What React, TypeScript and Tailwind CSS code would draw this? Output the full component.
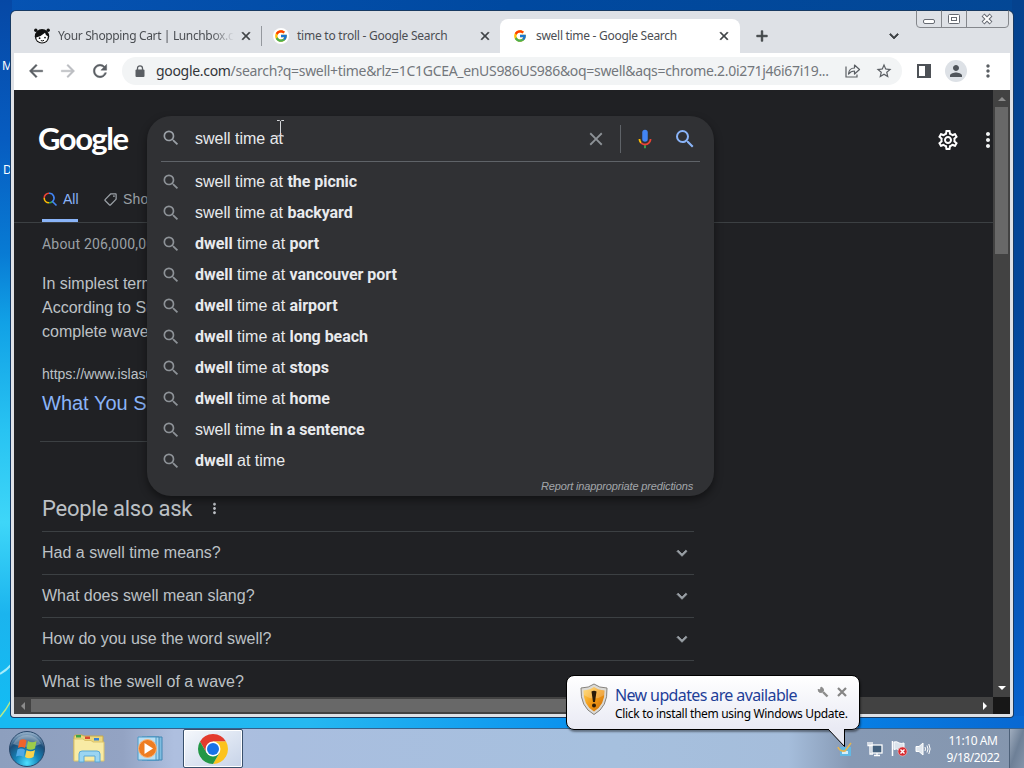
import { FcGoogle } from "react-icons/fc";
import {
  MdAdd,
  MdArrowBack,
  MdArrowForward,
  MdClose,
  MdKeyboardArrowDown,
  MdMoreVert,
  MdOutlineSell,
  MdOutlineSettings,
  MdPerson,
  MdRefresh,
  MdSearch,
  MdStarBorder,
} from "react-icons/md";

type Part = { text: string; bold?: boolean };

const suggestions: Part[][] = [
  [{ text: "swell time at " }, { text: "the picnic", bold: true }],
  [{ text: "swell time at " }, { text: "backyard", bold: true }],
  [{ text: "dwell", bold: true }, { text: " time at " }, { text: "port", bold: true }],
  [{ text: "dwell", bold: true }, { text: " time at " }, { text: "vancouver port", bold: true }],
  [{ text: "dwell", bold: true }, { text: " time at " }, { text: "airport", bold: true }],
  [{ text: "dwell", bold: true }, { text: " time at " }, { text: "long beach", bold: true }],
  [{ text: "dwell", bold: true }, { text: " time at " }, { text: "stops", bold: true }],
  [{ text: "dwell", bold: true }, { text: " time at " }, { text: "home", bold: true }],
  [{ text: "swell time " }, { text: "in a sentence", bold: true }],
  [{ text: "dwell", bold: true }, { text: " at time" }],
];

const questions = [
  "Had a swell time means?",
  "What does swell mean slang?",
  "How do you use the word swell?",
  "What is the swell of a wave?",
];

function LunchboxIcon() {
  return (
    <svg width="16" height="16" viewBox="0 0 16 16" className="shrink-0">
      <circle cx="1.800" cy="2.200" r="1.700" fill="#111" />
      <circle cx="14.200" cy="2.200" r="1.700" fill="#111" />
      <circle cx="8" cy="8.300" r="7.200" fill="#111" />
      <path d="M2.200 9.500Q7 8.600 11 4.800Q11.500 7.800 13.900 8.200Q13.600 14.400 8 14.400Q2.800 14.200 2.200 9.500Z" fill="#fff" />
      <circle cx="5.600" cy="10.200" r="0.900" fill="#111" />
      <circle cx="11" cy="9.600" r="0.900" fill="#111" />
      <path d="M6.800 12.500Q8.500 13.400 10 12.300" stroke="#111" fill="none" />
    </svg>
  );
}

function WindowButtons() {
  return (
    <svg width="93" height="18" viewBox="0 0 93 18" className="absolute right-[4px] top-[-1px]" fill="none">
      <path d="M.5 .5V14Q.5 17.500 4 17.500H89Q92.500 17.500 92.500 14V.5M25.500 .5V17.500M50.500 .5V17.500" stroke="#84878c" />
      <rect x="7.500" y="9.500" width="11" height="4" rx="1.500" fill="#fff" stroke="#666a72" />
      <rect x="32.500" y="4.500" width="11" height="9" rx="1" fill="#fff" stroke="#666a72" />
      <rect x="35.500" y="7.500" width="5" height="3" stroke="#666a72" />
      <path d="M67 5l8 8M75 5l-8 8" stroke="#666a72" strokeWidth="4" />
      <path d="M67.500 5.500l7 7M74.500 5.500l-7 7" stroke="#fff" strokeWidth="2" />
    </svg>
  );
}

function TabStrip() {
  return (
    <div className="relative flex h-[42px] shrink-0 pt-2 pl-[23px] text-[12px] text-[#4b4e53]">
      <div className="flex h-[34px] w-[227px] items-center">
        <LunchboxIcon />
        <div className="ml-2 w-[178px] overflow-hidden whitespace-nowrap tracking-[-0.36px] [mask-image:linear-gradient(to_right,black_86%,transparent_99%)]">
          Your Shopping Cart | Lunchbox.com
        </div>
        <MdClose className="ml-[3px] size-[14px] shrink-0 text-[#3c4043] [&>path:last-child]:stroke-1" />
      </div>
      <div className="mt-[7px] h-[20px] w-px bg-[#94989e]" />
      <div className="flex h-[34px] w-[238px] items-center pl-[11px]">
        <div className="flex size-4 shrink-0 items-center justify-center rounded-full bg-white">
          <FcGoogle className="size-[14px]" />
        </div>
        <div className="ml-[8px] w-[180px] whitespace-nowrap tracking-[-0.24px]">time to troll - Google Search</div>
        <MdClose className="ml-px size-[14px] shrink-0 text-[#3c4043] [&>path:last-child]:stroke-1" />
      </div>
      <div className="flex h-[34px] w-[240px] items-center rounded-t-lg bg-white pl-[13px]">
        <FcGoogle className="size-[14px]" />
        <div className="ml-[9px] w-[181px] whitespace-nowrap tracking-[-0.29px]">swell time - Google Search</div>
        <MdClose className="size-[14px] shrink-0 text-[#3c4043] [&>path:last-child]:stroke-1" />
      </div>
      <MdAdd className="mt-[8px] ml-[13px] size-[18px] text-[#3c4043] [&>path:last-child]:stroke-1" />
      <MdKeyboardArrowDown className="mt-[8px] ml-[114px] size-[18px] text-[#3c4043] [&>path:last-child]:stroke-1" />
      <WindowButtons />
    </div>
  );
}

function Toolbar() {
  return (
    <div className="flex h-[37px] shrink-0 items-center bg-white pb-px pl-[12px] text-[#5a5e63]">
      <MdArrowBack className="size-5 [&>path:last-child]:stroke-[0.5px]" />
      <MdArrowForward className="ml-3 size-5 text-[#bcbec2] [&>path:last-child]:stroke-[0.5px]" />
      <MdRefresh className="ml-[12px] size-5 [&>path:last-child]:stroke-[0.5px]" />
      <div className="ml-[12px] flex h-7 w-[780px] items-center rounded-full bg-[#f2f4f5]">
        <svg width="10" height="13" viewBox="0 0 10 13" className="ml-[13px] shrink-0">
          <rect x="0.500" y="4.500" width="9" height="7.500" rx="1" fill="currentColor" />
          <path d="M2.500 5V3.300A2.500 2.500 0 0 1 7.500 3.300V5" fill="none" stroke="currentColor" strokeWidth="1.300" />
        </svg>
        <div className="ml-[11px] w-[684px] whitespace-nowrap text-[14px] leading-[20px] tracking-[-0.31px] text-[#73777c]">
          <span className="text-[#33363a]">google.com</span>
          /search?q=swell+time&amp;rlz=1C1GCEA_enUS986US986&amp;oq=swell&amp;aqs=chrome.2.0i271j46i67i19...
        </div>
        <svg width="17" height="16" viewBox="0 0 17 16" fill="none" stroke="currentColor" strokeWidth="1.200" className="ml-[4px]">
          <path d="M2 3.500V14H13V11.500" />
          <path d="M4.500 11Q5 5 10.500 5V2L15.500 6.500L10.500 11V8Q7 8 4.500 11Z" strokeLinejoin="round" />
        </svg>
        <MdStarBorder className="ml-[14px] size-[18px]" />
      </div>
      <svg width="14" height="14" viewBox="0 0 14 14" className="ml-[15px]">
        <path d="M0 0H14V14H0ZM2 2V12H8V2Z" fill="#4d5156" fillRule="evenodd" />
      </svg>
      <div className="ml-[14px] flex size-[22px] items-center justify-center rounded-full bg-[#dde1e6]">
        <MdPerson className="size-[18px] text-[#50555b]" />
      </div>
      <MdMoreVert className="ml-[11px] size-[20px]" />
    </div>
  );
}

function MicIcon() {
  return (
    <svg width="22" height="22" viewBox="0 0 24 24">
      <path d="M12 15a3 3 0 0 0 3-3V5a3 3 0 0 0-6 0v7a3 3 0 0 0 3 3z" fill="#4285f4" />
      <path d="M11 18.900h2V22h-2z" fill="#34a853" />
      <path d="M7 12H5c0 1.900.8 3.700 2.050 4.950l1.400-1.400C7.560 14.640 7 13.400 7 12z" fill="#fbbc04" />
      <path d="M12 17c-1.400 0-2.640-.56-3.550-1.450l-1.400 1.400C8.300 18.200 10.100 19 12 19c3.870 0 7-3.130 7-7h-2c0 2.760-2.240 5-5 5z" fill="#ea4335" />
    </svg>
  );
}

function SearchDropdown() {
  return (
    <div className="absolute top-[26px] left-[133px] flex h-[380px] w-[567px] flex-col rounded-[24px] bg-[#303134] text-[16px] text-[#e8eaed] shadow-[0_4px_8px_rgba(0,0,0,0.45)]">
      <div className="mx-[14px] flex h-[46px] items-center border-b border-[#5f6368]">
        <MdSearch className="size-5 -translate-y-px text-[#9aa0a6]" />
        <div className="ml-[14px] w-[388px] whitespace-pre">swell time at</div>
        <MdClose className="ml-[2px] size-[22px] text-[#8d9297]" />
        <div className="ml-[13px] h-[28px] w-px bg-[#5f6368]" />
        <div className="ml-[13px]">
          <MicIcon />
        </div>
        <MdSearch className="ml-[17px] size-[24px] shrink-0 text-[#8ab4f8]" />
      </div>
      <div className="pt-[4px]">
        {suggestions.map((parts, i) => (
          <div key={i} className="flex h-[31px] items-center pl-[14px]">
            <MdSearch className="size-5 text-[#8d9297]" />
            <div className="ml-[14px] whitespace-pre">
              {parts.map((p, j) => (
                <span key={j} className={p.bold ? "font-['Roboto'] font-bold tracking-[-0.05px]" : ""}>
                  {p.text}
                </span>
              ))}
            </div>
          </div>
        ))}
      </div>
      <div className="mt-[4px] mr-[21px] text-right text-[11px] leading-[13px] tracking-[-0.14px] text-[#a3a7ab] italic">
        Report inappropriate predictions
      </div>
      {/* mouse text cursor */}
      <svg width="9" height="17" viewBox="0 0 9 17" className="absolute top-[4px] left-[129px]" fill="none" stroke="#d5d7da">
        <path d="M1 .5H3.500L4.500 1.500L5.500 .5H8M4.500 1.500V15M1 16H3.500L4.500 15L5.500 16H8" />
      </svg>
    </div>
  );
}

function ResultsPage() {
  return (
    <div className="relative h-[607px] w-[979px] overflow-hidden bg-[#202124] font-['Liberation_Sans',sans-serif] text-[#bdc1c6]">
      <div className="flex h-[98px] items-center pt-px pl-[24px]">
        <div className="w-[92px] pb-[3px] font-['Lato',sans-serif] text-[31px] leading-[36px] font-bold tracking-[-1.5px] text-white">
          Google
        </div>
        <MdOutlineSettings className="ml-[809px] size-6 shrink-0 text-white" />
        <MdMoreVert className="ml-[16px] size-6 shrink-0 text-[#f1f3f4]" />
      </div>
      <div className="flex h-[35px] border-b border-[#3c4043] pl-[28px] text-[14px]">
        <div className="flex h-[34px] w-[36px] items-center border-b-[3px] border-[#8ab4f8] pb-[9px] text-[#8ab4f8]">
          <svg width="15" height="15" viewBox="0 0 15 15" fill="none" strokeWidth="1.600" className="mt-px ml-px shrink-0">
            <path d="M6 1.200A4.800 4.800 0 0 0 1.200 6" stroke="#ea4335" />
            <path d="M1.200 6A4.800 4.800 0 0 0 6 10.800" stroke="#fbbc04" />
            <path d="M6 10.800A4.800 4.800 0 0 0 9.500 9.500" stroke="#34a853" />
            <path d="M6 1.200A4.800 4.800 0 0 1 9.500 9.500L13.500 13.500" stroke="#4285f4" />
          </svg>
          <span className="ml-[5px]">All</span>
        </div>
        <div className="flex h-[23px] items-center pl-[25px] text-[#9aa0a6]">
          <MdOutlineSell className="size-[15px] -scale-x-100" />
          <span className="ml-[5px] tracking-[0.2px]">Shopping</span>
        </div>
      </div>
      <div className="w-[680px] pl-[28px]">
        <div className="mt-[12px] font-['Roboto'] text-[14px] leading-[18px] tracking-[0.2px] text-[#9aa0a6]">
          About 206,000,000 results
        </div>
        <div className="mt-[19px] text-[16px] leading-[24px]">
          In simplest terms
          <br />
          According to Surf
          <br />
          complete wave
        </div>
        <div className="mt-[21px] text-[14px] leading-[18px]">https://www.islasurf</div>
        <div className="mt-[7px] text-[20px] leading-[26px] text-[#8ab4f8]">What You Should</div>
        <div className="mt-[25px] -ml-[2px] h-px w-[654px] bg-[#3c4043]" />
        <div className="mt-[50px] flex h-[32px] items-center font-['Roboto'] text-[22px] tracking-[-0.25px]">
          People also ask
          <MdMoreVert className="ml-[14px] size-[17px]" />
        </div>
        <div className="mt-[7px]">
          {questions.map((q) => (
            <div key={q} className="flex h-[43px] items-center justify-between border-t border-[#3c4043] text-[16px]">
              {q}
              <MdKeyboardArrowDown className="mr-[2px] size-5 text-[#9aa0a6] [&>path:last-child]:stroke-1" />
            </div>
          ))}
        </div>
      </div>
      <SearchDropdown />
    </div>
  );
}

function BrowserWindow() {
  return (
    <div className="absolute top-[11px] left-[11px] flex h-[706px] w-[1002px] flex-col rounded-t-[5px] rounded-b-[3px] bg-[#dee1e6] shadow-[0_0_0_1px_#173a63]">
      <TabStrip />
      <div className="mr-[3px] mb-[3px] ml-[3px] flex grow flex-col overflow-hidden">
        <Toolbar />
        <div className="flex">
          <ResultsPage />
          <div className="flex w-[17px] flex-col items-center bg-[#424242]">
            <div className="flex h-[17px] items-center">
              <div className="border-x-4 border-b-4 border-x-transparent border-b-[#8b8b8b]" />
            </div>
            <div className="h-[147px] w-[13px] bg-[#686868]" />
            <div className="mt-auto mb-[7px] border-x-4 border-t-4 border-x-transparent border-t-white" />
          </div>
        </div>
        <div className="flex h-[17px]">
          <div className="flex w-[979px] items-center bg-[#424242]">
            <div className="flex w-[17px] justify-center">
              <div className="border-y-4 border-r-4 border-y-transparent border-r-[#8b8b8b]" />
            </div>
            <div className="h-[13px] w-[760px] bg-[#686868]" />
            <div className="mr-[6px] ml-auto border-y-4 border-l-4 border-y-transparent border-l-white" />
          </div>
          <div className="grow bg-[#171717]" />
        </div>
      </div>
    </div>
  );
}

function StartOrb() {
  return (
    <svg width="38" height="38" viewBox="0 0 38 38">
      <defs>
        <radialGradient id="orb" cx="50%" cy="90%" r="85%">
          <stop offset="0" stopColor="#4fe0ff" />
          <stop offset="0.400" stopColor="#1583b8" />
          <stop offset="0.750" stopColor="#1c4d78" />
          <stop offset="1" stopColor="#8ba9c4" />
        </radialGradient>
      </defs>
      <circle cx="19" cy="19" r="17.500" fill="url(#orb)" stroke="#29486b" />
      <path d="M5 14A15 14 0 0 1 33 14Q20 20 5 14Z" fill="#fff" opacity=".28" />
      <path d="M11.500 10.500Q15 8 18.500 10.500L17 18Q13.500 16 10 18Z" fill="#f0642c" />
      <path d="M20 11Q24 13.500 28.500 11L27 18.500Q22.500 21 18.500 18.500Z" fill="#9ccc4a" />
      <path d="M9.500 19.500Q13.500 17.500 17 20L15.500 27Q12 25 8 26.500Z" fill="#4fa8e6" />
      <path d="M18.500 20.200Q23 22.500 27 20L25.500 27Q21 29.500 17 27Z" fill="#fbd34c" />
    </svg>
  );
}

function ExplorerIcon() {
  return (
    <svg width="34" height="30" viewBox="0 0 34 30">
      <path d="M2 3Q2 1 4 1H10L12 2H31V26H2Z" fill="#ecd77c" stroke="#c6a94d" />
      <path d="M4 1H9V3.500H4Z" fill="#3fa648" />
      <path d="M13 2.500H18V5H13Z" fill="#d8492f" />
      <path d="M22 4H27V6.500H22Z" fill="#3a82cf" />
      <path d="M2 5H11L13 6.500H19L21 8H32V27H2Z" fill="#f8eba5" stroke="#dcc36a" />
      <path d="M7 28V20Q7 17 10 17H25Q28 17 28 20V28H23V22H12V28Z" fill="#9bd5f2" stroke="#5aa8d6" />
    </svg>
  );
}

function MediaPlayerIcon() {
  return (
    <svg width="28" height="26" viewBox="0 0 28 26">
      <path d="M10 1H25V24H10Z" fill="#7fbce0" stroke="#4288b5" />
      <path d="M5 1H22V24H5Z" fill="#a6d6ef" stroke="#4288b5" />
      <path d="M1 1H19V24H1Z" fill="#b9dff3" stroke="#4b9ac8" />
      <circle cx="10.500" cy="12.500" r="9" fill="#ee7d22" stroke="#f7b27a" />
      <path d="M7.500 7V18L16 12.500Z" fill="#fff" />
    </svg>
  );
}

function ChromeIcon() {
  return (
    <svg width="32" height="32" viewBox="0 0 48 48">
      <path d="M24 24L4.500 12.800A22.500 22.500 0 0 1 43.500 12.800H24Z" fill="#e33b2e" />
      <path d="M24 24L43.500 12.800A22.500 22.500 0 0 1 24 46.500L33.700 29.600Z" fill="#fcc31e" />
      <path d="M24 12.800H43.500L34 30Z" fill="#fcc31e" />
      <path d="M24 12.800L14.300 29.600L4.500 12.800Z" fill="#e33b2e" />
      <path d="M4.500 12.800L14.300 29.600L24 35L33.700 29.600L24 46.500A22.500 22.500 0 0 1 4.500 12.800Z" fill="#239746" />
      <circle cx="24" cy="24" r="11.200" fill="#fff" />
      <circle cx="24" cy="24" r="9" fill="#1a73e8" />
    </svg>
  );
}

function UpdateIcon() {
  return (
    <svg width="16" height="16" viewBox="0 0 16 16">
      <path d="M3 6H14V15H3Z" fill="#62b9e4" />
      <path d="M5 10H11V13H5Z" fill="#d6eef8" />
      <path d="M1 6A6 5 0 0 0 8 10L14 2" fill="none" stroke="#e4b552" strokeWidth="1.600" />
    </svg>
  );
}

function NetworkIcon() {
  return (
    <svg width="16" height="16" viewBox="0 0 16 16" fill="none">
      <rect x="5" y="4" width="10" height="8" fill="#44617e" stroke="#fff" strokeWidth="1.300" />
      <path d="M7 14.500H13M10 12V14.500M1 1V4.500H5V1M3 1V4M3 4.500V13H6" stroke="#fff" strokeWidth="1.300" />
    </svg>
  );
}

function FlagIcon() {
  return (
    <svg width="17" height="17" viewBox="0 0 17 17">
      <path d="M1.500 1V16" stroke="#fff" strokeWidth="1.500" />
      <path d="M3 2Q6 1 8 3Q10 4 13 3V10Q10 11 8 10Q6 8 3 9.500Z" fill="#dbe3ec" stroke="#fff" />
      <circle cx="11.500" cy="11.500" r="4.500" fill="#d82a30" stroke="#f3c2c3" strokeWidth=".6" />
      <path d="M9.500 9.500L13.500 13.500M13.500 9.500L9.500 13.500" stroke="#fff" strokeWidth="1.400" />
    </svg>
  );
}

function SpeakerIcon() {
  return (
    <svg width="16" height="16" viewBox="0 0 16 16" fill="none" stroke="#fff">
      <path d="M1 5.500H4L8 2V14L4 10.500H1Z" fill="#dfe6ee" />
      <path d="M10 6Q11 8 10 10M12 4.500Q14 8 12 11.500M13.800 3Q16.500 8 13.800 13" />
    </svg>
  );
}

function Taskbar() {
  return (
    <div className="absolute inset-x-0 bottom-0 flex h-[40px] items-center border-t border-[#35618d] bg-[linear-gradient(to_right,#8d9fbe_0%,#93a3c3_12%,#aebfdf_17%,#a9bedf_28%,#a6c0de_60%,#a5bddb_77%,#8699b4_83%,#8596ae_100%)]">
      <div className="ml-[8px]">
        <StartOrb />
      </div>
      <div className="ml-[26px]">
        <ExplorerIcon />
      </div>
      <div className="ml-[31px]">
        <MediaPlayerIcon />
      </div>
      <div className="ml-[18px] flex h-[39px] w-[60px] items-center justify-center rounded-[2px] border border-[#39506c] bg-linear-to-br from-[#f5f8fc] to-[#c7d3e8] shadow-[inset_0_0_0_1px_#fff]">
        <ChromeIcon />
      </div>
      <div className="ml-auto flex items-center">
        <UpdateIcon />
        <div className="ml-[14px]">
          <NetworkIcon />
        </div>
        <div className="ml-[8px]">
          <FlagIcon />
        </div>
        <div className="ml-[7px]">
          <SpeakerIcon />
        </div>
        <div className="ml-[10px] w-[64px] text-center text-[12px] leading-[17px] tracking-[-0.44px] whitespace-nowrap text-white">
          11:10 AM
          <br />
          9/18/2022
        </div>
        <div className="ml-[4px] h-[39px] w-[15px] border-l border-[#4d6078] bg-linear-to-br from-[#a0adbe] via-[#6e8097] to-[#8494aa]" />
      </div>
    </div>
  );
}

function UpdateBalloon() {
  return (
    <div className="absolute top-[675px] left-[566px] flex h-[55px] w-[294px] rounded-[8px] border border-black bg-linear-to-b from-white to-[#e9eaf4] shadow-[1px_2px_2px_rgba(0,0,0,0.4)]">
      <svg width="28" height="33" viewBox="0 0 28 33" className="mt-[7px] ml-[13px] shrink-0">
        <defs>
          <linearGradient id="shield" x1="0" y1="0" x2="1" y2="1">
            <stop offset="0" stopColor="#ffd65a" />
            <stop offset="0.500" stopColor="#f39a16" />
            <stop offset="1" stopColor="#c86b09" />
          </linearGradient>
        </defs>
        <path d="M14 1Q19 5 27 5Q28 24 14 31.500Q0 24 1 5Q9 5 14 1Z" fill="#dcdad5" stroke="#85827d" />
        <path d="M14 4Q18 7 24.500 7.500Q25 22 14 28.500Q3 22 3.500 7.500Q10 7 14 4Z" fill="url(#shield)" />
        <path d="M14 4Q18 7 24.500 7.500L24.300 12Q14 19 3.700 12L3.500 7.500Q10 7 14 4Z" fill="#fff" opacity=".22" />
        <path d="M11.500 8.500Q14 7 16.500 8.500L15 19H13Z" fill="#2a1a08" />
        <circle cx="14" cy="22.500" r="2" fill="#2a1a08" />
      </svg>
      <div className="ml-[7px] whitespace-nowrap">
        <div className="mt-[9px] text-[16px] leading-[20px] tracking-[-0.62px] text-[#1f3f98]">New updates are available</div>
        <div className="text-[12px] leading-[17px] tracking-[-0.32px] text-black">Click to install them using Windows Update.</div>
      </div>
      <div className="absolute top-[10px] right-[12px] flex gap-[8px]">
        <svg width="12" height="12" viewBox="0 0 12 12" fill="none" stroke="#8c8c8c">
          <path d="M6 6L10.500 10.500" strokeWidth="2.400" />
          <path d="M1 3.500L3.500 4L4 1Q7 2 6.500 5Q5 7.500 2 6Z" fill="#8c8c8c" />
        </svg>
        <svg width="10" height="12" viewBox="0 0 10 12" fill="none" stroke="#858585" strokeWidth="2.200">
          <path d="M1 2L9 10M9 2L1 10" />
        </svg>
      </div>
      <svg width="20" height="20" viewBox="0 0 20 20" className="absolute top-[52px] left-[260px]">
        <path d="M0 0H17.500V18.500L1 1Z" fill="#e9eaf4" />
        <path d="M1 1L17.500 18.500V1" stroke="#000" fill="none" />
      </svg>
    </div>
  );
}

function App() {
  return (
    <div className="relative h-[768px] w-[1024px] overflow-hidden bg-[linear-gradient(to_right,#0653b3,#0049a0_50%,#034795)] font-['Noto_Sans',sans-serif]">
      {/* wallpaper */}
      <div className="absolute inset-y-0 left-0 w-[12px] bg-[linear-gradient(to_bottom,#0648a5_0%,#075cc0_18%,#087bd4_33%,#11a1e6_42%,#28c3f2_56%,#3ed6f8_68%,#1bb4ee_80%,#12bdf4_95%)]" />
      <div className="absolute inset-y-0 right-0 w-[12px] bg-[linear-gradient(to_bottom,#04428e,#04479a_40%,#0759bd_80%,#0868d6)]" />
      <div className="absolute inset-x-0 top-[716px] h-[14px] bg-[linear-gradient(to_right,#17b9f1,#25b8f1_30%,#0c93ee_55%,#0784e8_80%,#0868d2)]" />
      <svg width="12" height="90" viewBox="0 0 12 90" className="absolute top-[650px] left-0" fill="none">
        <path d="M0 24Q7 20 12 14" stroke="#a5ecfa" strokeWidth="2" />
        <path d="M0 67Q6 60 12 49" stroke="#b7e98a" strokeWidth="1.500" />
      </svg>
      <div className="absolute top-[58px] left-[2px] text-[12px] leading-[16px] text-white">M</div>
      <div className="absolute top-[162px] left-[3px] text-[12px] leading-[16px] text-white">D</div>
      <BrowserWindow />
      <Taskbar />
      <UpdateBalloon />
    </div>
  );
}

export default App;
